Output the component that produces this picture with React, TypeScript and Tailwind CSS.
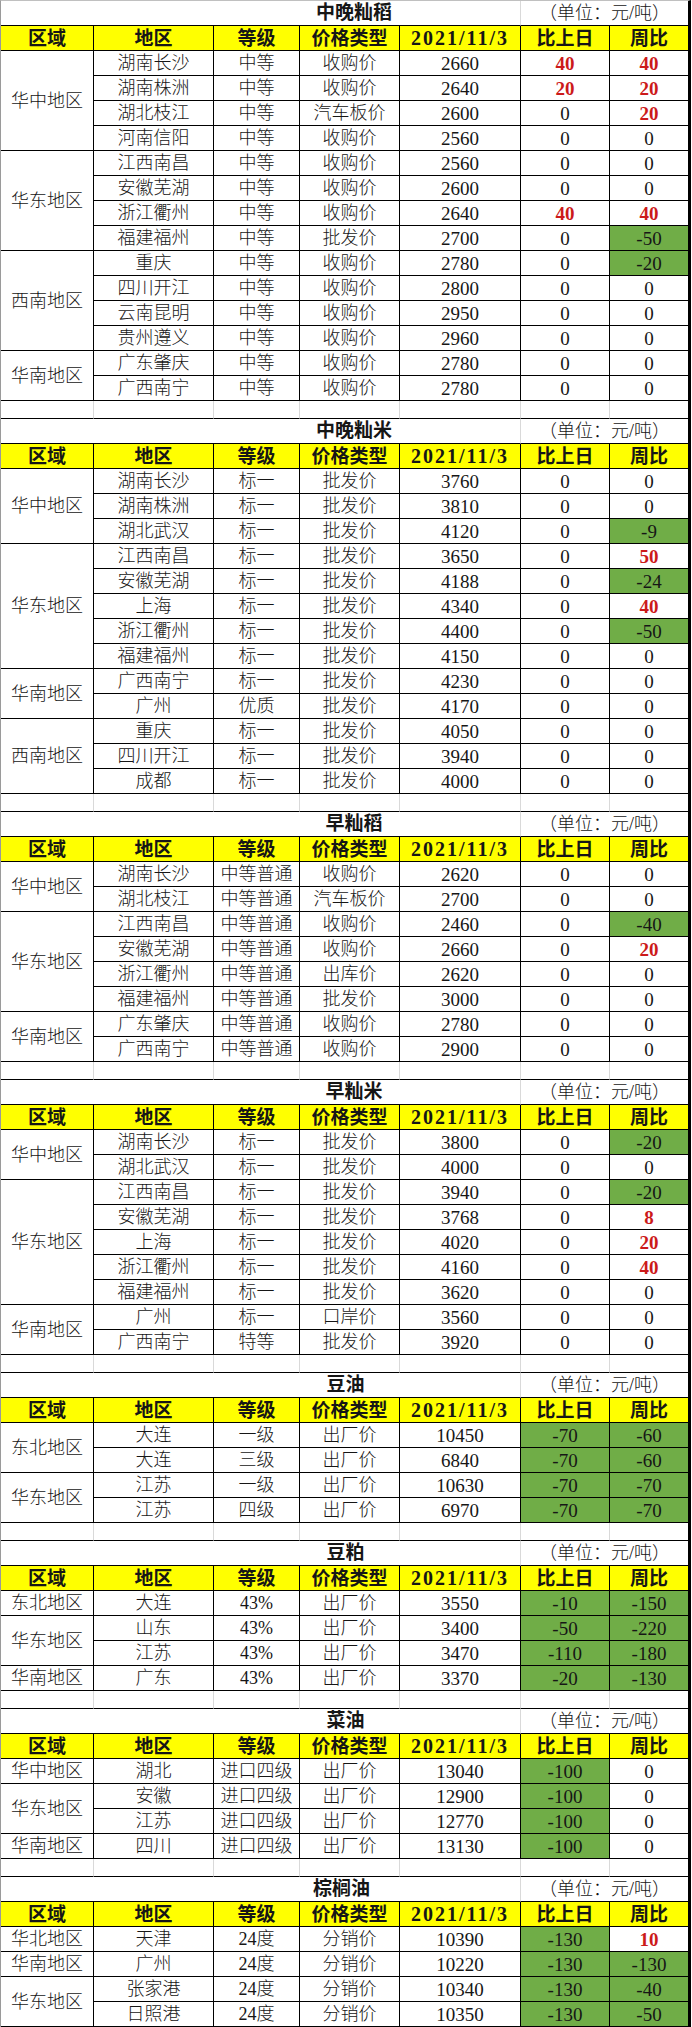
import React from "react";

type Row = [string, string, string, string, string, string];
type Group = [string, Row[]];
type Table = { title: string; pl: string; groups: Group[] };

const tables: Table[] = [
  {
    title: "中晚籼稻",
    pl: "pl-[187px]",
    groups: [
      ["华中地区", [
        ["湖南长沙", "中等", "收购价", "2660", "40", "40"],
        ["湖南株洲", "中等", "收购价", "2640", "20", "20"],
        ["湖北枝江", "中等", "汽车板价", "2600", "0", "20"],
        ["河南信阳", "中等", "收购价", "2560", "0", "0"],
      ]],
      ["华东地区", [
        ["江西南昌", "中等", "收购价", "2560", "0", "0"],
        ["安徽芜湖", "中等", "收购价", "2600", "0", "0"],
        ["浙江衢州", "中等", "收购价", "2640", "40", "40"],
        ["福建福州", "中等", "批发价", "2700", "0", "-50"],
      ]],
      ["西南地区", [
        ["重庆", "中等", "收购价", "2780", "0", "-20"],
        ["四川开江", "中等", "收购价", "2800", "0", "0"],
        ["云南昆明", "中等", "收购价", "2950", "0", "0"],
        ["贵州遵义", "中等", "收购价", "2960", "0", "0"],
      ]],
      ["华南地区", [
        ["广东肇庆", "中等", "收购价", "2780", "0", "0"],
        ["广西南宁", "中等", "收购价", "2780", "0", "0"],
      ]],
    ],
  },
  {
    title: "中晚籼米",
    pl: "pl-[187px]",
    groups: [
      ["华中地区", [
        ["湖南长沙", "标一", "批发价", "3760", "0", "0"],
        ["湖南株洲", "标一", "批发价", "3810", "0", "0"],
        ["湖北武汉", "标一", "批发价", "4120", "0", "-9"],
      ]],
      ["华东地区", [
        ["江西南昌", "标一", "批发价", "3650", "0", "50"],
        ["安徽芜湖", "标一", "批发价", "4188", "0", "-24"],
        ["上海", "标一", "批发价", "4340", "0", "40"],
        ["浙江衢州", "标一", "批发价", "4400", "0", "-50"],
        ["福建福州", "标一", "批发价", "4150", "0", "0"],
      ]],
      ["华南地区", [
        ["广西南宁", "标一", "批发价", "4230", "0", "0"],
        ["广州", "优质", "批发价", "4170", "0", "0"],
      ]],
      ["西南地区", [
        ["重庆", "标一", "批发价", "4050", "0", "0"],
        ["四川开江", "标一", "批发价", "3940", "0", "0"],
        ["成都", "标一", "批发价", "4000", "0", "0"],
      ]],
    ],
  },
  {
    title: "早籼稻",
    pl: "pl-[187px]",
    groups: [
      ["华中地区", [
        ["湖南长沙", "中等普通", "收购价", "2620", "0", "0"],
        ["湖北枝江", "中等普通", "汽车板价", "2700", "0", "0"],
      ]],
      ["华东地区", [
        ["江西南昌", "中等普通", "收购价", "2460", "0", "-40"],
        ["安徽芜湖", "中等普通", "收购价", "2660", "0", "20"],
        ["浙江衢州", "中等普通", "出库价", "2620", "0", "0"],
        ["福建福州", "中等普通", "批发价", "3000", "0", "0"],
      ]],
      ["华南地区", [
        ["广东肇庆", "中等普通", "收购价", "2780", "0", "0"],
        ["广西南宁", "中等普通", "收购价", "2900", "0", "0"],
      ]],
    ],
  },
  {
    title: "早籼米",
    pl: "pl-[187px]",
    groups: [
      ["华中地区", [
        ["湖南长沙", "标一", "批发价", "3800", "0", "-20"],
        ["湖北武汉", "标一", "批发价", "4000", "0", "0"],
      ]],
      ["华东地区", [
        ["江西南昌", "标一", "批发价", "3940", "0", "-20"],
        ["安徽芜湖", "标一", "批发价", "3768", "0", "8"],
        ["上海", "标一", "批发价", "4020", "0", "20"],
        ["浙江衢州", "标一", "批发价", "4160", "0", "40"],
        ["福建福州", "标一", "批发价", "3620", "0", "0"],
      ]],
      ["华南地区", [
        ["广州", "标一", "口岸价", "3560", "0", "0"],
        ["广西南宁", "特等", "批发价", "3920", "0", "0"],
      ]],
    ],
  },
  {
    title: "豆油",
    pl: "pl-[170px]",
    groups: [
      ["东北地区", [
        ["大连", "一级", "出厂价", "10450", "-70", "-60"],
        ["大连", "三级", "出厂价", "6840", "-70", "-60"],
      ]],
      ["华东地区", [
        ["江苏", "一级", "出厂价", "10630", "-70", "-70"],
        ["江苏", "四级", "出厂价", "6970", "-70", "-70"],
      ]],
    ],
  },
  {
    title: "豆粕",
    pl: "pl-[170px]",
    groups: [
      ["东北地区", [["大连", "43%", "出厂价", "3550", "-10", "-150"]]],
      ["华东地区", [
        ["山东", "43%", "出厂价", "3400", "-50", "-220"],
        ["江苏", "43%", "出厂价", "3470", "-110", "-180"],
      ]],
      ["华南地区", [["广东", "43%", "出厂价", "3370", "-20", "-130"]]],
    ],
  },
  {
    title: "菜油",
    pl: "pl-[170px]",
    groups: [
      ["华中地区", [["湖北", "进口四级", "出厂价", "13040", "-100", "0"]]],
      ["华东地区", [
        ["安徽", "进口四级", "出厂价", "12900", "-100", "0"],
        ["江苏", "进口四级", "出厂价", "12770", "-100", "0"],
      ]],
      ["华南地区", [["四川", "进口四级", "出厂价", "13130", "-100", "0"]]],
    ],
  },
  {
    title: "棕榈油",
    pl: "pl-[162px]",
    groups: [
      ["华北地区", [["天津", "24度", "分销价", "10390", "-130", "10"]]],
      ["华南地区", [["广州", "24度", "分销价", "10220", "-130", "-130"]]],
      ["华东地区", [
        ["张家港", "24度", "分销价", "10340", "-130", "-40"],
        ["日照港", "24度", "分销价", "10350", "-130", "-50"],
      ]],
    ],
  },
];

const SPAN: Record<number, string> = {
  1: "row-span-1",
  2: "row-span-2",
  3: "row-span-3",
  4: "row-span-4",
  5: "row-span-5",
};

const GRID = "grid grid-cols-[93px_120px_86px_100px_121px_89px_78px]";

const cellBase =
  "flex items-center justify-center border-b border-black leading-none whitespace-nowrap";

function diffClass(v: string) {
  const n = parseFloat(v);
  if (n > 0) return "text-[#cc1a1a] font-bold";
  if (n < 0) return "bg-[#70ad47] font-light";
  return "font-light";
}

function TableBlock({ t, last }: { t: Table; last: boolean }) {
  const headers = ["区域", "地区", "等级", "价格类型", "2021/11/3", "比上日", "周比"];
  return (
    <>
      <div className={`${GRID} auto-rows-[25px]`}>
        <div
          className={`col-span-5 flex items-center justify-center border-b border-r border-b-black border-r-[#d9d9d9] text-[19px] font-bold ${t.pl}`}
        >
          {t.title}
        </div>
        <div className="col-span-2 flex items-center justify-center border-b border-black text-[18px] font-light">
          （单位：元/吨）
        </div>
        {headers.map((h, i) => (
          <div
            key={h}
            className={`${cellBase} bg-[#ffff00] font-bold ${i < 6 ? "border-r" : ""} ${
              i === 4 ? "text-[20px] tracking-[2px]" : "text-[19px]"
            }`}
          >
            {h}
          </div>
        ))}
        {t.groups.map(([region, rows], gi) => (
          <React.Fragment key={gi}>
            <div
              className={`col-start-1 ${SPAN[rows.length]} ${cellBase} border-r text-[18px] font-light`}
            >
              {region}
            </div>
            {rows.map((r, ri) => (
              <React.Fragment key={ri}>
                <div className={`${cellBase} border-r text-[18px] font-light`}>{r[0]}</div>
                <div className={`${cellBase} border-r text-[18px] font-light`}>{r[1]}</div>
                <div className={`${cellBase} border-r text-[18px] font-light`}>{r[2]}</div>
                <div className={`${cellBase} border-r text-[19px] font-light`}>{r[3]}</div>
                <div className={`${cellBase} border-r text-[19px] ${diffClass(r[4])}`}>
                  {r[4]}
                </div>
                <div className={`${cellBase} text-[19px] ${diffClass(r[5])}`}>{r[5]}</div>
              </React.Fragment>
            ))}
          </React.Fragment>
        ))}
      </div>
      {!last && (
        <div className={`${GRID} auto-rows-[18px]`}>
          {[0, 1, 2, 3, 4, 5, 6].map((i) => (
            <div
              key={i}
              className={`border-b border-b-black ${i < 6 ? "border-r border-r-[#d9d9d9]" : ""}`}
            />
          ))}
        </div>
      )}
    </>
  );
}

export default function App() {
  return (
    <div className="bg-white w-[692px] min-h-[2027px]">
      <div className="w-[691px] border-l border-l-[#9a9a9a] border-t border-t-[#c0c0c0] border-r-[3px] border-r-black text-[#161616] font-['Liberation_Serif','Noto_Sans_CJK_SC',serif]">
        {tables.map((t, i) => (
          <TableBlock key={t.title} t={t} last={i === tables.length - 1} />
        ))}
      </div>
    </div>
  );
}
